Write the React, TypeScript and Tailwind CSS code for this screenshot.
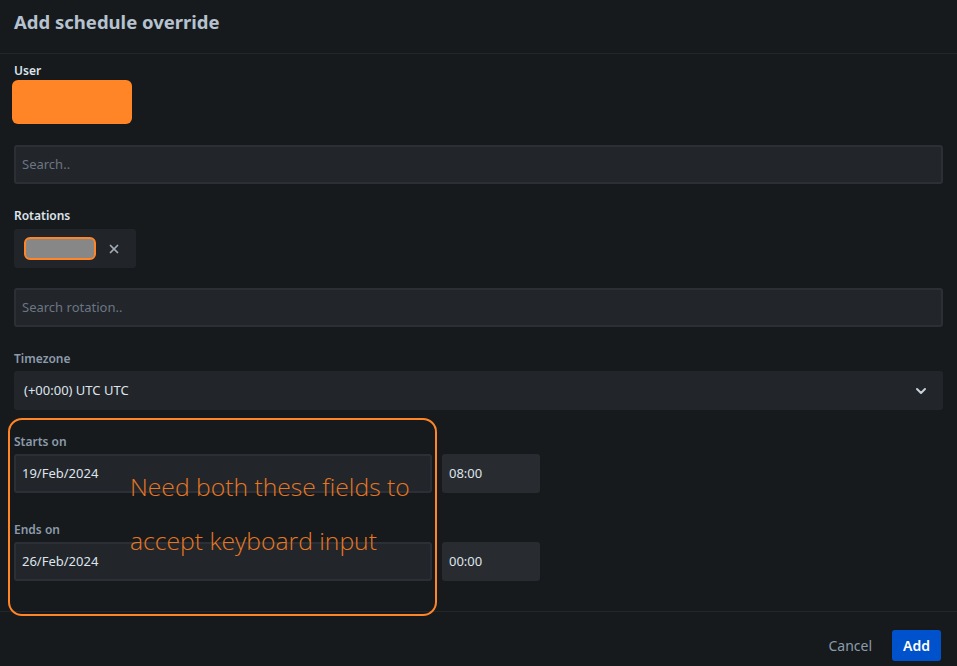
import { ChevronDown, X } from "lucide-react";

const labelMuted = "block h-4 text-[12px] font-semibold leading-4 text-[#8c9bab]";
const labelLight = "block h-4 text-[12px] font-semibold leading-4 text-[#dee4ea]";
const inputFrame =
  "flex h-[39px] items-center rounded-[3px] border-2 border-[#2c3036] bg-[#22252a] px-[6px] text-[13px]";

export default function App() {
  return (
    <div
      className="relative h-[666px] w-[957px] overflow-hidden bg-[#161a1d]"
      style={{ fontFamily: "'Noto Sans', 'Open Sans', sans-serif" }}
    >
      {/* Header */}
      <div className="flex h-[54px] items-center border-b border-[#23272c] px-[14px] pb-[10px]">
        <h1 className="text-[18.5px] font-bold text-[#b6c2cf]">Add schedule override</h1>
      </div>

      {/* Body */}
      <div className="px-[14px] pt-[9px]">
        <label className={labelLight}>User</label>
        <div className="h-[66px] pt-[1px]">
          <div className="-ml-[2px] h-[44px] w-[120px] rounded-[6px] bg-[#ff8526]" />
        </div>

        <div className={inputFrame + " w-full text-[#6b7683]"}>Search..</div>

        <div className="mt-[24px]">
          <label className={labelLight}>Rotations</label>
        </div>
        <div className="mt-[5px] flex h-[39px] w-[122px] items-center gap-[11px] rounded-[3px] bg-[#212428] pl-[10px]">
          <div className="h-[23px] w-[72px] rounded-[6px] border-2 border-[#ff8526] bg-[#878787]" />
          <X size={14} strokeWidth={3} className="text-[#a3acb6]" />
        </div>

        <div className={"mt-[20px] w-full text-[#6b7683] " + inputFrame}>Search rotation..</div>

        <div className="mt-[24px]">
          <label className={labelMuted}>Timezone</label>
        </div>
        <div className="mt-[4px] flex h-[39px] w-full items-center justify-between rounded-[3px] bg-[#22252a] pl-[10px] pr-[14px] text-[13px] text-[#dee4ea]">
          <span>(+00:00) UTC UTC</span>
          <ChevronDown size={16} strokeWidth={3} className="text-[#c7d1db]" />
        </div>

        <div className="mt-[24px]">
          <label className={labelMuted}>Starts on</label>
        </div>
        <div className="mt-[4px] flex gap-[10px]">
          <div className={inputFrame + " w-[418px] text-[#dee4ea]"}>19/Feb/2024</div>
          <div className="flex h-[39px] w-[98px] items-center rounded-[3px] bg-[#282b2f] px-[7px] text-[13px] text-[#dee4ea]">
            08:00
          </div>
        </div>

        <div className="mt-[29px]">
          <label className={labelMuted}>Ends on</label>
        </div>
        <div className="mt-[4px] flex gap-[10px]">
          <div className={inputFrame + " w-[418px] text-[#dee4ea]"}>26/Feb/2024</div>
          <div className="flex h-[39px] w-[98px] items-center rounded-[3px] bg-[#282b2f] px-[7px] text-[13px] text-[#dee4ea]">
            00:00
          </div>
        </div>
      </div>

      {/* Footer */}
      <div className="mt-[30px] flex items-center justify-end gap-[20px] border-t border-[#23272c] px-[16px] pt-[18px]">
        <button className="text-[14px] text-[#8c9bab]">Cancel</button>
        <button className="h-[31px] rounded-[3px] bg-[#0052cc] px-[11px] text-[14px] font-semibold text-white">
          Add
        </button>
      </div>

      {/* Annotation overlay */}
      <div className="pointer-events-none absolute left-[8px] top-[418px] h-[198px] w-[429px] rounded-[14px] border-2 border-[#ff8526]" />
      <div
        className="pointer-events-none absolute left-[130px] top-[460px] text-[24.7px] font-light leading-[54px] text-[#e87722]"
        style={{ fontFamily: "'Open Sans', sans-serif" }}
      >
        <div>Need both these fields to</div>
        <div>accept keyboard input</div>
      </div>
    </div>
  );
}
